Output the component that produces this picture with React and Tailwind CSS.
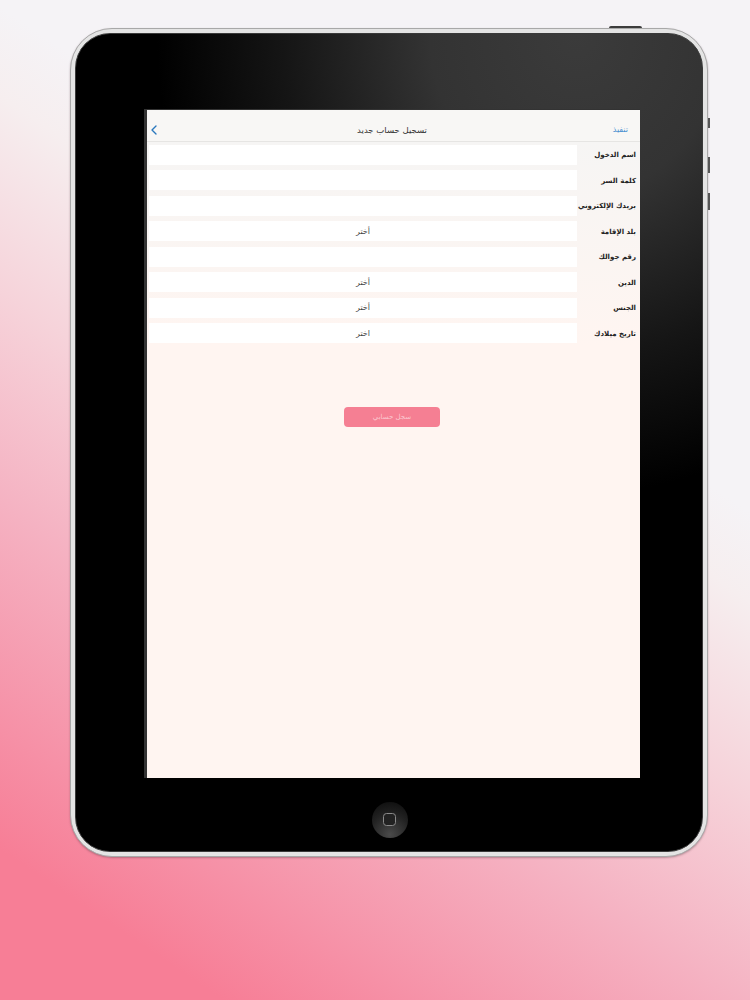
import React from 'react';
import { ChevronLeft } from 'lucide-react';

const rows = [
  { label: 'اسم الدخول' },
  { label: 'كلمة السر' },
  { label: 'بريدك الإلكتروني' },
  { label: 'بلد الإقامة', value: 'أختر' },
  { label: 'رقم جوالك' },
  { label: 'الدين', value: 'أختر' },
  { label: 'الجنس', value: 'أختر' },
  { label: 'تاريخ ميلادك', value: 'اختر' },
];

function Row({ label, value }) {
  return (
    <div className="flex h-[25.5px] items-center">
      <div className="ml-[2px] flex h-[20px] w-[428px] items-center justify-center bg-white pt-[1px] text-[8px] text-[#444]" dir="rtl">
        {value}
      </div>
      <div className="flex-1 whitespace-nowrap pr-[4px] pt-[1px] text-right text-[7px] font-bold text-[#222]" dir="rtl">
        {label}
      </div>
    </div>
  );
}

export default function App() {
  return (
    <div className="h-[1000px] w-[750px] overflow-hidden bg-[linear-gradient(214deg,#f5f3f6_0%,#f5f3f6_34%,#f6eeef_40%,#f6d3da_53%,#f5b2c2_67%,#f690a6_82%,#f77e96_90%,#f77e96_100%)] pl-[70px] pt-[28px] font-['DejaVu_Sans',sans-serif]">
      <div className="relative h-[829px] w-[638px] rounded-[42px] border border-[#a8a8a8] bg-[#e4e4e4] p-[4px] shadow-[0_1px_2px_rgba(90,60,70,0.4)]">
        {/* side buttons */}
        <div className="absolute right-[65px] top-[-3.5px] h-[2.5px] w-[33px] rounded-t-sm bg-[#3c3c3c]" />
        <div className="absolute right-[-3px] top-[89px] h-[10px] w-[2px] bg-[#555]" />
        <div className="absolute right-[-3px] top-[128px] h-[16px] w-[2px] bg-[#555]" />
        <div className="absolute right-[-3px] top-[164px] h-[17px] w-[2px] bg-[#555]" />

        <div className="flex h-full flex-col items-start rounded-[35px] border border-[#3a3a3a] bg-[radial-gradient(ellipse_420px_460px_at_80%_0%,#3b3b3b_0%,#333_35%,#151515_70%,#000_100%)] pl-[68px] pt-[75px]">
          <div className="h-[669px] w-[496px] border-l-[3px] border-t border-[#333] bg-[#fff5f1]">
            <div className="grid h-[32px] grid-cols-[1fr_auto_1fr] items-center border-b border-[#e6e5e3] bg-[#f8f7f5] pt-[9px]">
              <ChevronLeft size={16} strokeWidth={2} className="ml-[-1px] text-[#2a78bd]" />
              <div className="mr-[3px] text-[8.5px] text-[#333]" dir="rtl">تسجيل حساب جديد</div>
              <div className="pr-[12px] text-right text-[8px] text-[#4a90d0]" dir="rtl">تنفيذ</div>
            </div>
            <div className="bg-[linear-gradient(180deg,#f6f5f4,#fbf5f2_60%,#fff5f1)]">
              {rows.map((row) => (
                <Row key={row.label} {...row} />
              ))}
            </div>
            <div className="flex justify-center pr-[3px] pt-[61px]">
              <button className="flex h-[20px] w-[96px] items-center justify-center rounded-[4px] bg-[#f57f93] pt-[1px] text-[7px] text-[#fbc6ce]" dir="rtl">
                سجل حسابي
              </button>
            </div>
          </div>
          <div className="flex w-[496px] flex-1 items-center justify-center pr-[5px] pt-[10px]">
            <div className="flex h-[36px] w-[36px] items-center justify-center rounded-full bg-[radial-gradient(circle_at_50%_90%,#4a4a4a,#222_55%,#0a0a0a)]">
              <div className="h-[13px] w-[13px] rounded-[3.5px] border border-[#8a8a8a] bg-[#222]" />
            </div>
          </div>
        </div>
      </div>
    </div>
  );
}
